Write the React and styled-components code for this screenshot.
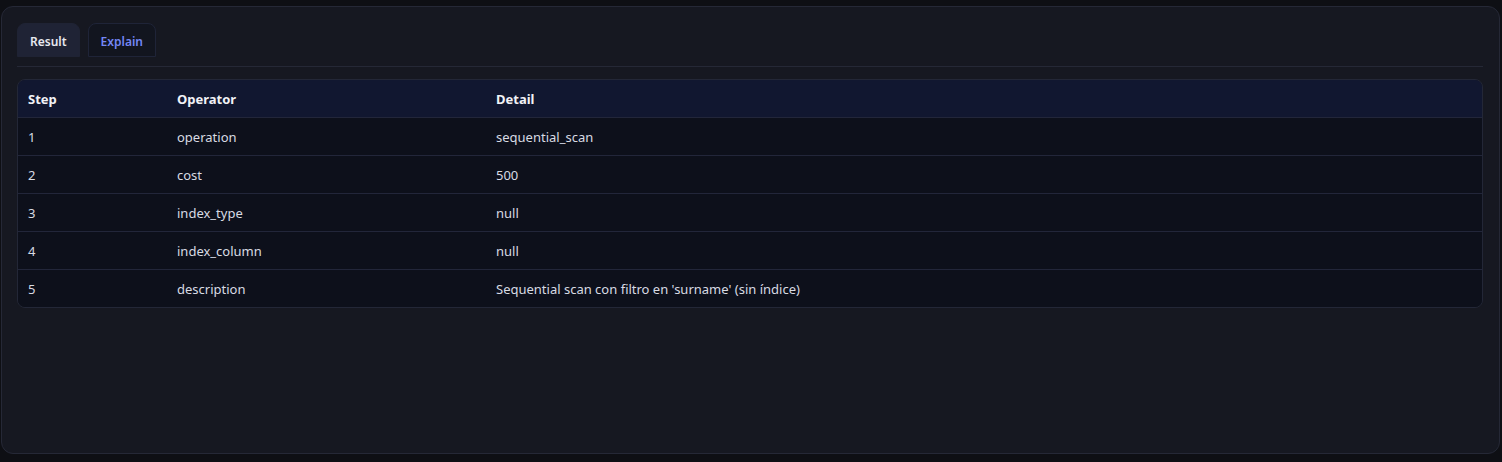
import React from 'react';
import styled, { createGlobalStyle } from 'styled-components';

const Global = createGlobalStyle`
  html, body {
    margin: 0;
    padding: 0;
    background: #0e0f14;
    font-family: "Noto Sans", "Open Sans", sans-serif;
  }
`;

const Page = styled.div`
  height: 462px;
  padding: 6px 2px 8px 1px;
  box-sizing: border-box;
`;

const Panel = styled.section`
  height: 100%;
  box-sizing: border-box;
  background: #161821;
  border: 1px solid #252836;
  border-radius: 12px;
  padding: 16px 16px 0 15px;
`;

const TabBar = styled.div`
  display: flex;
  gap: 8px;
  padding-bottom: 9px;
  border-bottom: 1px solid #252836;
`;

const Tab = styled.button`
  font-family: inherit;
  font-size: 12px;
  font-weight: 600;
  height: 34px;
  padding: 2px 12px 0;
  border-radius: 8px 8px 0 0;
  cursor: pointer;
  border: 1px solid ${p => (p.$active ? '#1f2334' : '#1f2438')};
  background: ${p => (p.$active ? '#1f2335' : '#12151f')};
  color: ${p => (p.$active ? '#e6e8ef' : '#7487f5')};
`;

const TableWrap = styled.div`
  margin-top: 12px;
  border: 1px solid #232737;
  border-radius: 8px;
  overflow: hidden;
`;

const Table = styled.table`
  width: 100%;
  border-collapse: collapse;
  table-layout: fixed;
  font-size: 13px;
`;

const Th = styled.th`
  box-sizing: border-box;
  text-align: left;
  font-weight: 700;
  color: #f1f2f6;
  background: #111730;
  height: 37px;
  padding: 2px 10px 0;
  width: ${p => p.$w || 'auto'};
`;

const Td = styled.td`
  color: #d8dbe3;
  height: 35px;
  padding: 2px 10px 0;
  background: #0d101b;
  border-top: 1px solid #22263a;
`;

const rows = [
  ['1', 'operation', 'sequential_scan'],
  ['2', 'cost', '500'],
  ['3', 'index_type', 'null'],
  ['4', 'index_column', 'null'],
  ['5', 'description', "Sequential scan con filtro en 'surname' (sin índice)"],
];

export default function App() {
  return (
    <>
      <Global />
      <Page>
        <Panel>
          <TabBar>
            <Tab $active>Result</Tab>
            <Tab>Explain</Tab>
          </TabBar>
          <TableWrap>
            <Table>
              <thead>
                <tr>
                  <Th $w="149px">Step</Th>
                  <Th $w="319px">Operator</Th>
                  <Th>Detail</Th>
                </tr>
              </thead>
              <tbody>
                {rows.map(r => (
                  <tr key={r[0]}>
                    {r.map((c, i) => (
                      <Td key={i}>{c}</Td>
                    ))}
                  </tr>
                ))}
              </tbody>
            </Table>
          </TableWrap>
        </Panel>
      </Page>
    </>
  );
}
